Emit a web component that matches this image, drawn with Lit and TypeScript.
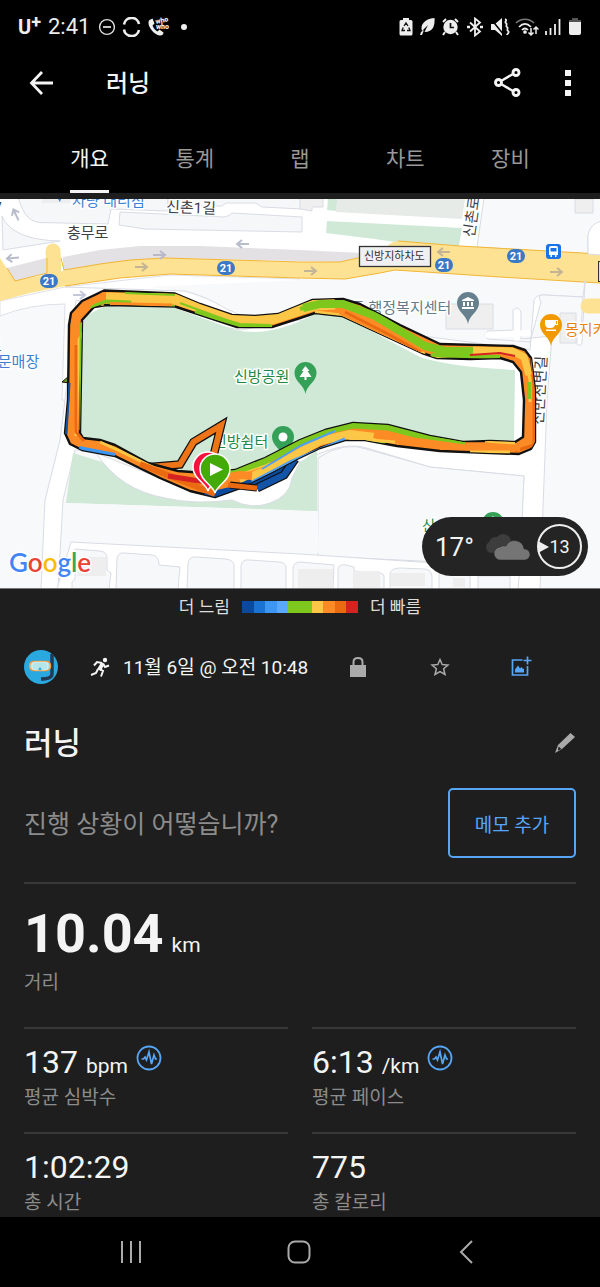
import { LitElement, html, svg, css } from "lit";
import { customElement } from "lit/decorators.js";
import { classMap } from "lit/directives/class-map.js";

const FONT = css`Roboto, "Noto Sans CJK KR", sans-serif`;

@customElement("status-bar")
class StatusBar extends LitElement {
  static styles = css`
    :host { display: flex; justify-content: space-between; align-items: center; height: 53px; padding: 0 16px 0 18px; color: #eee; font-family: ${FONT}; }
    .side { display: flex; align-items: center; }
    .left { gap: 7px; }
    .right { gap: 5px; }
    .carrier { display: flex; font-size: 20px; line-height: 24px; font-weight: 700; }
    .carrier sup { font-size: 18px; line-height: 14px; }
    .time { font-size: 22px; line-height: 26px; }
    svg { display: block; }
    .who { font-size: 7px; font-weight: 900; fill: #eee; }
  `;
  render() {
    return html`
      <div class="side left">
        <span class="carrier">U<sup>+</sup></span>
        <span class="time">2:41</span>
        <svg width="18" height="18" viewBox="0 0 18 18" fill="none" stroke="#ddd" stroke-width="1.4"><circle cx="10" cy="9" r="7.4"/><path d="M6 9h8" stroke-width="1.8"/></svg>
        <svg width="19" height="20" viewBox="0 0 19 20" fill="none" stroke="#eee" stroke-width="2.6"><path d="M2 7.500A7.600 7.600 0 0 1 17 7M2 12.500A7.600 7.600 0 0 0 17 13"/></svg>
        <svg width="25" height="20" viewBox="0 0 25 20"><path fill="#eee" d="M1.500 3l3-1.500 2 5-2 2c1 3 3 5 5 6l2-2 4 3c0 3-3 3-4 3C7 18 .5 11 .5 6c0-1 0-2 1-3z"/><text class="who" x="8" y="7" transform="rotate(-12 8 7)">who</text><text class="who" x="8" y="12">who</text></svg>
        <svg width="8" height="8"><circle cx="4" cy="4" r="3" fill="#eee"/></svg>
      </div>
      <div class="side right">
        <svg width="14" height="19" viewBox="0 0 14 19"><path fill="#eee" d="M4 1h6v2h2q1.500 0 1.500 1.500V17q0 1.500-1.500 1.500H2Q.5 18.500.5 17V4.500Q.5 3 2 3h2z"/><path d="M5 9l2-3 2 3M9.800 10.500l1.200 3H8M6 13.500H3l1.200-3" fill="none" stroke="#111" stroke-width="1.3"/></svg>
        <svg width="18" height="19" viewBox="0 0 18 19"><path fill="#eee" d="M16.500 1c.5 7-1 14-10 14L10 8l-6 6C2 8 6 2 16.500 1zM3 15l3-2-2 5H2z"/></svg>
        <svg width="19" height="19" viewBox="0 0 19 19"><circle cx="9.500" cy="10" r="7.200" fill="#eee"/><path d="M9.500 6v4.500H13" stroke="#111" stroke-width="1.700" fill="none"/><path d="M2 5l3-3M17 5l-3-3M4 15l-2 3M15 15l2 3" stroke="#eee" stroke-width="2"/></svg>
        <svg width="20" height="20" viewBox="0 0 20 20" fill="none" stroke="#eee" stroke-width="1.800"><path d="M5 5.500l10 9-5 4V1.500l5 4-10 9"/><path d="M2 10h3M15 10h3" stroke-width="2.500"/></svg>
        <svg width="20" height="20" viewBox="0 0 20 20"><path fill="#eee" d="M1 7h4l7-6v18l-7-6H1z"/><path d="M1 2l13 16" stroke="#000" stroke-width="1.500"/><path d="M15 2c3 1-1 3 1 4s-1 3 1 4-1 3 1 4-1 3-1 4" fill="none" stroke="#eee" stroke-width="1.800"/></svg>
        <svg width="24" height="20" viewBox="0 0 24 20" fill="none" stroke="#eee" stroke-width="1.700"><path d="M1 6C6 1 14 1 19 6" stroke="#777"/><path d="M4 10c4-4 8-4 12 0M7 13c2-2 4-2 6 0"/><circle cx="10" cy="15" r="1" fill="#eee"/><path d="M16 11v7M13.500 15.500L16 18l2.500-2.500M21 17v-7M18.500 12.500L21 10l2.500 2.500" stroke-width="1.500"/></svg>
        <svg width="17" height="19" viewBox="0 0 17 19" stroke="#eee" stroke-width="1.800"><path d="M2 14v4M6.500 11v7M11 7v11M15.500 2v16"/></svg>
        <svg width="18" height="19" viewBox="0 0 18 19"><path fill="#555" d="M6 1h6v2h3v3H3V3h3z"/><path fill="#eee" d="M3 5h12v11q0 2-2 2H5q-2 0-2-2z"/></svg>
      </div>`;
  }
}

@customElement("app-header")
class AppHeader extends LitElement {
  static styles = css`
    :host { display: block; color: #f4f4f4; font-family: ${FONT}; }
    .bar { display: flex; align-items: center; height: 60px; padding: 0 14px 0 24px; }
    h1 { flex: 1; margin: 0 0 0 48px; padding-top: 2px; font-size: 24px; line-height: 32px; font-weight: 500; }
    button { border: 0; padding: 0; background: none; color: inherit; font: inherit; cursor: pointer; }
    svg { display: block; }
    .share { margin-right: 27px; }
    .tabs { display: flex; padding: 0 37px; }
    .tabs div { flex: 1; display: flex; justify-content: center; }
    .tab { height: 80px; box-sizing: border-box; padding: 15px 0 0; border-bottom: 3px solid transparent; font-size: 21px; line-height: 28px; color: #999; }
    .on { color: #f4f4f4; border-color: #f4f4f4; }
  `;
  render() {
    return html`
      <div class="bar">
        <button aria-label="뒤로"><svg width="34" height="34" viewBox="0 0 34 34" fill="none" stroke="#f4f4f4" stroke-width="2.800"><path d="M18 6L7.500 17 18 28M7.500 17H29"/></svg></button>
        <h1>러닝</h1>
        <button class="share" aria-label="공유"><svg width="32" height="34" viewBox="0 0 32 34" fill="none" stroke="#f4f4f4" stroke-width="2.900"><path d="M10 15l12-7M10 18l12 7" stroke-width="2.400"/><circle cx="7.500" cy="16.500" r="3"/><circle cx="25" cy="6.500" r="3"/><circle cx="25" cy="26.500" r="3"/></svg></button>
        <button aria-label="더보기"><svg width="36" height="34" viewBox="0 0 36 34" fill="#f4f4f4"><path d="M15 4h6v6h-6zM15 14h6v6h-6zM15 24h6v6h-6z"/></svg></button>
      </div>
      <nav class="tabs">
        ${["개요", "통계", "랩", "차트", "장비"].map(
          (t, i) => html`<div><button class=${classMap({ tab: true, on: i === 0 })}>${t}</button></div>`
        )}
      </nav>`;
  }
}

const shield = (x: number, y: number) => svg`
  <rect x=${x - 9} y=${y - 7} width="18" height="14" rx="7" fill="#3b78c6"/>
  <text class="num" x=${x} y=${y + 4}>21</text>`;
const arrow = (x: number, y: number, r: number, c: string) => svg`
  <path transform="translate(${x} ${y}) rotate(${r})" d="M-6 0H5M1-4l5 4-5 4" stroke=${c} stroke-width="2" fill="none"/>`;
const pin = (x: number, y: number, c: string, inner: unknown) => svg`
  <g transform="translate(${x} ${y})"><path d="M0 21C-1 12-11 9-11 0a11 11 0 0 1 22 0C11 9 1 12 0 21z" fill=${c}/>${inner}</g>`;

const BAND =
  "M65 433L68 400 69 325 71 313 82 301 104 290.500 175 293.500 200 304 232 315 255 316 278 314 300 305 312 300 343 299 360 304 400 325 440 344 513 346 525 350 531 358 535 390 535 442 531 449 519 454 490 453 440 451 397 446 365 440 345 440 320 448 297 459 268 474 240 488 215 497 190 491 160 478 115 456 82 450 70 444z" +
  "M82 320L80 433 83 438 100 440 115 445 148 463 178 471 205 473 235 470 265 458 300 440 325 430 353 423 388 425 430 436 463 442 490 441 515 442 523 437 524 400 521 372 513 362 500 358 470 359 437 358 422 353 342 316 315 313 300 318 272 327 237 327 175 306.500 107 305 94 307z";

@customElement("route-map")
class RouteMap extends LitElement {
  static styles = css`
    :host { display: block; position: relative; background: #f8f9fb; font-family: ${FONT}; }
    .map { display: block; width: 100%; height: auto; }
    text { font-size: 15px; paint-order: stroke; stroke: #fff; stroke-width: 3px; stroke-linejoin: round; }
    .road { fill: #3c4048; }
    .blue { fill: #3b7fd0; }
    .green { fill: #1e8a45; }
    .slate { fill: #5f7c8c; }
    .orange { fill: #e8830c; }
    .plate { font-size: 11px; fill: #333; stroke: none; }
    .num { font-size: 11px; font-weight: 700; fill: #fff; stroke: none; text-anchor: middle; }
    .logo { font-family: Lato, sans-serif; font-size: 26px; font-weight: 600; }
    .edge { stroke: #d9dce4; stroke-width: 1; }
    .weather { position: absolute; right: 12px; bottom: 12px; display: flex; align-items: center; height: 59px; width: 166px; box-sizing: border-box; padding: 0 6px 0 13px; border-radius: 30px; background: #242424; color: #f4f4f4; }
    .temp { flex: 1; font-size: 26px; line-height: 32px; }
    .wind { display: flex; align-items: center; justify-content: center; position: relative; width: 45px; height: 45px; margin-left: 6px; border: 2px solid #eee; border-radius: 50%; box-sizing: border-box; font-size: 18px; line-height: 24px; }
    .wind svg { position: absolute; left: -1px; top: 15px; }
  `;
  render() {
    return html`
      <svg class="map" viewBox="0 199 600 389" role="img" aria-label="지도">
        <rect y="199" width="600" height="389" fill="#f8f9fb"/>
        <path fill="#fff" d="M0 199H484L477 250 600 256V262L0 301z"/>
        <g fill="#f6f7f9" class="edge">
          <path d="M2 216Q12 240 60 241L3 250z"/>
          <path d="M18 198L22 208Q28 222 40 222.500L108 224 111 209 168 211V198z"/>
          <path d="M120 212L224 217Q230 216 232 213L302 217V232L145 229 119 225z"/>
          <path d="M168 198V206L222 206 226 203H256L262 207 302 209V198z"/>
        </g>
        <path fill="#efefef" stroke="#d9dce4" d="M300 198H323V207H312V211L300 209z"/>
        <path fill="#eeeeef" d="M42 199H70V203H42z"/>
        <path fill="#cfe9d6" d="M328 199H338L336 211 327 210zM327 221L462 228 459 246 395 242 375 239 326 233z"/>
        <path fill="#e6ebe7" d="M337 199H465L462 219 336 212z"/>
        <path class="edge" fill="#f8f9fb" d="M484 198H601V221Q590 226 588 236V254L477 247z"/>
        <path fill="#efefef" class="edge" d="M575 199H593V213H575z"/>

        <path fill="#e3e1e4" d="M7 268L46 258V273L15 281zM63 257L100 250 140 246 200 246 300 250 362 253V257L340 262 165 258 63 271z"/>
        <path fill="#fff" stroke="#dfe1e8" d="M0 301L65 287 170 275 300 279 300 400 62 400 65 304Q30 304 0 316z"/>
        <path fill="#f8f9fb" d="M150 287L300 280V310L245 316 220 305 185 292zM300 279L345 280 395 271 600 284V500H300z"/>
        <path fill="none" class="edge" d="M65 287L185 291Q205 296 225 308L240 315"/>
        <path fill="#fde293" d="M0 258L15 281 63 271 100 264 130 260 165 258 300 262 340 262 362 257 388 246Q392 241 400 241L460 246 600 254V283L500 277 395 270 380 273 345 279 300 278 170 274 120 278 65 286 30 293 0 301z"/>
        <path stroke="#fde293" stroke-width="15" stroke-linecap="round" d="M53 251L54 278"/>
        <path fill="none" stroke="#f2b534" d="M7 268L15 281 47 273V258M61 258L64 270 100 264 130 260 165 258 300 262 340 262 362 257M398 241L460 246 600 254M600 283L500 277 395 270 380 273 345 279 300 278 170 274 120 278 65 286"/>
        <path fill="#fff" class="edge" d="M588 254V235Q590 224 601 221V255z"/>

        <path fill="#fff" class="edge" d="M585 281L582 343Q580 347 577 344V333L552 336 547 400 540 589H518L524 476 430 467 370 449Q345 440 310 458L300 462 75 450 63 500 58 589H41L45 500 60 440 65 400 76 300 240 330 300 320 530 350 534 300Q537 294 545 295L583 297 585 281z"/>
        <path fill="#f8f9fb" class="edge" d="M541 302Q536 294 545 295L583 297 581 332 552 336 521 339V312Q518 305 513 310V330L488 331Q482 335 488 339L530 342z"/>
        <path stroke="#fff" stroke-width="6" fill="none" stroke-linecap="round" d="M488 335L528 333M517 312V338M552 334L580 331"/>
        <path stroke="#fde293" stroke-width="15" stroke-linecap="round" d="M588 306H601"/>
        <path fill="#efefef" class="edge" d="M446 304H493V329H446zM560 313H576V343H560z"/>
        <path fill="#cfe9d6" d="M82 318L105 306 175 308 235 330Q270 338 315 314L345 317 420 357Q450 367 515 370L514 440 460 441 360 424 320 432 240 471 175 472 110 447 81 440z"/>
        <path fill="#cfe9d6" d="M73 453L66 503 317 511V450L290 470 240 490 160 480z"/>
        <path fill="#fff" class="edge" d="M96 453Q120 490 165 498 195 505 232 500 252 510 270 503 290 496 292 478L300 462 240 470 160 478z"/>
        <path fill="#f8f9fb" class="edge" d="M318 458Q345 440 370 450L430 467 524 476 520 566 318 556z"/>
        <path fill="#f8f9fb" d="M66 503L318 511 319 553 70 541z"/>
        <path fill="#cfe9d6" d="M300 462L317 453V511L290 510V497z"/>
        <path fill="#fff" class="edge" d="M71 542L300 554 420 562 520 566 518 589H57z"/>
        <path fill="#f7f8fa" class="edge" d="M75 549L100 551Q107 552 107 558V570L111 573 109 589H72V582L75 579zM116 589L117 559Q118 552 124 553L152 555Q159 556 159 565L180 567 178 589zM187 589L188 564Q189 556 196 557L226 559Q234 560 234 566V589zM241 589V566Q242 559 249 560L280 562Q287 563 286 570V589zM293 589V568Q294 562 300 562L334 565 333 589zM338 589V568Q340 564 346 565L354 567V571L380 573Q385 574 384 578V589zM390 589V574Q391 568 400 568L425 569Q432 570 432 577V589zM439 589V572L470 574V589zM478 589V576H510V589z"/>
        <path fill="#eeeeef" d="M83 557H106V576H77zM298 569H333V589H298zM353 571H380V589H353zM391 573H425V586H391zM453 578H465V587H453z"/>

        ${arrow(16, 215, -115, "#b8bccb")}${arrow(13, 258, 175, "#b8bccb")}${arrow(159, 255, 0, "#b8b8c8")}
        ${arrow(243, 244, 180, "#b8bccb")}${arrow(79, 295, 0, "#c4c8d8")}${arrow(141, 267, 0, "#c3b496")}
        ${arrow(310, 271, 0, "#c3b496")}${arrow(444, 252, 180, "#c3b496")}${arrow(556, 272, 0, "#c3b496")}
        ${shield(49, 281)}${shield(226, 268)}${shield(444, 265)}${shield(516, 256)}
        <rect x="546" y="244" width="15" height="15" rx="3" fill="#1a73e8"/>
        <path fill="#fff" d="M549 248q0-2 2-2h5q2 0 2 2v7h-1.500v2H555v-2h-3v2h-1.500v-2H549zM550.500 248v3.500h6V248z" fill-rule="evenodd"/>
        <rect x="359.500" y="246.500" width="71" height="20" fill="#f0f0f2" stroke="#333" stroke-width="1.300"/>
        <text class="plate" x="364" y="260">신방지하차도</text>
        <rect x="598.500" y="261.500" width="20" height="20" fill="#ddd" stroke="#333"/>

        <path d="M58 199l2 3 1-3" fill="#3b7fd0"/>
        <text class="blue" x="72" y="206">차량 대리점</text>
        <text class="road" x="166" y="212" transform="rotate(2 166 212)">신촌1길</text>
        <text class="road" x="67" y="238">충무로</text>
        <text class="road" x="-8" y="213">V</text>
        <text class="road" transform="translate(474 238) rotate(-82)">신촌로</text>
        <text class="blue" x="-12" y="351">로</text>
        <text class="blue" x="-16" y="367">전문매장</text>
        <text class="green" x="234" y="382">신방공원</text>
        <text class="green" x="213" y="447">신방쉼터</text>
        <text class="slate" x="351" y="313">동 행정복지센터</text>
        <text class="orange" x="565" y="335">몽지카페</text>
        <text class="road" transform="translate(543 425) rotate(-87)">신반천변길</text>
        <text class="green" x="422" y="531">산</text>
        ${pin(305.500, 373, "#34a058", svg`<path fill="#fff" d="M0-7L4-2H2L6 4H1v3h-2V4h-5l4-6h-2z"/>`)}
        ${pin(283, 437, "#34a058", svg`<circle r="4.500" fill="#fff"/>`)}
        ${pin(468, 303, "#66808e", svg`<path fill="#fff" d="M0-6l6 3v1H-6v-1zM-5-1h2v4h-2zM-1-1h2v4h-2zM3-1h2v4H3zM-6 4H6v2H-6z"/>`)}
        ${pin(551, 325, "#f29900", svg`<path fill="#fff" d="M-6-5H7v5H4Q3 3 0 3h-2q-4 0-4-5zM-5 4.500H5V6H-5zM5-4v3h1v-3z" fill-rule="evenodd"/>`)}
        ${pin(493, 523, "#34a058", svg`<path fill="#fff" d="M0-7L4-2H-4z"/>`)}

        <g fill="none" stroke-miterlimit="6">
          <path d="M252 485L276 474 291 459" stroke="#111" stroke-width="8"/>
          <path d="M252 485L276 474 291 459" stroke="#0b4a9e" stroke-width="5.500"/>
          <path d="M257 488L284 475 295 459" stroke="#111" stroke-width="9"/>
          <path d="M257 488L284 475 295 459" stroke="#1254a8" stroke-width="6.500"/>
          <path d="M150 467L180 464.500 193.500 442 221 425.500 211 466" stroke="#111" stroke-width="8.500"/>
          <path d="M150 467L180 464.500 193.500 442 221 425.500 211 466" stroke="#ee7418" stroke-width="6"/>
        </g>
        <path d="M69 376L62 382 69 383z" fill="#5f9a20" stroke="#111"/>
        <clipPath id="band"><path clip-rule="evenodd" d=${BAND}/></clipPath>
        <path d=${BAND} fill="#fd8b25" fill-rule="evenodd" stroke="#111" stroke-width="2.400" stroke-linejoin="round"/>
        <g clip-path="url(#band)" fill="none" stroke-linejoin="round">
          <path stroke="#fcc746" stroke-width="11" d="M106 298L175 299 215 312 240 320 272 319 315 305 335 304"/>
          <path stroke="#fcc746" stroke-width="3" d="M76 436L79 340 92 315 104 305M425 354L342 315 315 312M430 357L510 352 525 358 530 380V402"/>
          <path stroke="#7ec81e" stroke-width="3" d="M81 430V325L96 308M90 307L107 301 130 302 112 303"/>
          <path stroke="#7ec81e" stroke-width="2" d="M107 303L175 306M180 303L240 325 272 326M125 293L175 295"/>
          <path stroke="#7ec81e" stroke-width="4" d="M195 312L240 325 271 326M300 309L320 303 343 304"/>
          <path stroke="#7ec81e" stroke-width="8" d="M303 308L320 304 343 304 375 316 425 346 445 351 473 351"/>
          <path stroke="#7ec81e" stroke-width="4" d="M431 355L500 357M529 382V399"/>
          <path stroke="#fcc746" stroke-width="7" d="M473 350L512 351 524 357 529 375"/>
          <path stroke="#fd8b25" stroke-width="3" d="M110 303.500L172 305"/>
          <path stroke="#fd8b25" stroke-width="5" d="M340 312L422 352M84 308L104 294"/>
          <path stroke="#ea6a12" stroke-width="3" d="M76 345V432L84 441M345 312L390 335 420 352M532 358L534 385V445L515 451"/>
          <path stroke="#d62222" stroke-width="2" d="M470 355L500 353 515 356"/>
          <path stroke="#1254a8" stroke-width="3" d="M66 434L69 383"/>
          <path stroke="#3d96f2" stroke-width="4" d="M79 448L115 455"/>
          <path stroke="#fcc746" stroke-width="3" d="M100 442L120 451 165 473M240 473L270 463"/>
          <path stroke="#7ec81e" stroke-width="7" d="M230 473L265 461 300 443 325 431 353 425 388 427 430 438 465 443"/>
          <path stroke="#fcc746" stroke-width="8" d="M240 481L270 469 320 441 350 434 400 440"/>
          <path stroke="#4b9ff5" stroke-width="2" d="M262 469L300 446 335 431"/>
          <path stroke="#4b9ff5" stroke-width="3" d="M250 483L290 462 345 439"/>
          <path stroke="#0b4a9e" stroke-width="8" d="M205 497L235 490 252 482"/>
          <path stroke="#fd8b25" stroke-width="8" d="M374 434L400 440 450 446 520 447M210 481L240 475 252 476"/>
          <path stroke="#7ec81e" stroke-width="3" d="M355 439L385 442M430 438L465 443"/>
          <path stroke="#fcc746" stroke-width="3" d="M470 452L510 452M485 441L515 443M345 438L395 442"/>
          <path stroke="#ea6a12" stroke-width="6" d="M140 464L175 478 215 494"/>
          <path stroke="#d62222" stroke-width="5" d="M168 476L212 483"/>
        </g>
        <path d="M230 485L257 488" stroke="#111" stroke-width="7"/><path d="M228 485L257 488" stroke="#ea6a12" stroke-width="5"/>
        <path d="M208 491C206 483 193 479 193 467a15 15 0 0 1 30 0C223 479 210 483 208 491z" fill="#f5123c" stroke="#fff" stroke-width="1.500"/>
        <path d="M215 493C213 485 200 481 200 469a15 15 0 0 1 30 0C230 481 217 485 215 493z" fill="#44aa08" stroke="#fff" stroke-width="1.500"/>
        <path d="M210 463v13l13-6.500z" fill="#fff"/>
        <text class="logo" x="9" y="572"><tspan fill="#4285f4">G</tspan><tspan fill="#ea4335">o</tspan><tspan fill="#fbbc05">o</tspan><tspan fill="#4285f4">g</tspan><tspan fill="#34a853">l</tspan><tspan fill="#ea4335">e</tspan></text>
      </svg>
      <div class="weather">
        <span class="temp">17°</span>
        <svg width="46" height="28" viewBox="0 0 46 28"><path fill="#3d3d3d" d="M6 20a6 6 0 0 1-2-11 7 7 0 0 1 8-5 8 8 0 0 1 14 3l-8 12z"/><path fill="#757575" stroke="#242424" stroke-width="0.500" d="M16 27a6.500 6.500 0 0 1-1-13 7 7 0 0 1 6-1 9.500 9.500 0 0 1 18 3 5.500 5.500 0 0 1 1 11z"/></svg>
        <span class="wind"><svg width="11" height="12"><path d="M0 0L11 6 0 12z" fill="#eee"/></svg>13</span>
      </div>`;
  }
}

const pulse = html`<svg width="26" height="26" viewBox="0 0 26 26" fill="none" stroke="#57a5f5"><circle cx="13" cy="13" r="11.500" stroke-width="1.800"/><path d="M5.500 14h2l1.500-2 1.500 3 2.500-8 2.500 12 2.500-9 1.500 4h1.500" stroke-width="1.700"/></svg>`;
const COLORS = ["#074a9e", "#1a73d3", "#3d96f2", "#5aa8fb", "#7ec81e", "#7ec81e", "#fcc746", "#fd8b25", "#ea6a12", "#d62222"];

@customElement("activity-summary")
class ActivitySummary extends LitElement {
  static styles = css`
    :host { display: block; color: #f4f4f4; font-family: ${FONT}; }
    svg { display: block; }
    button { border: 0; padding: 0; background: none; font: inherit; cursor: pointer; }
    .legend { display: flex; align-items: center; justify-content: center; gap: 12px; height: 36px; border-top: 1px solid #777; font-size: 17px; line-height: 24px; color: #ddd; }
    .scale { display: flex; width: 116px; }
    .scale i { flex: 1; height: 12px; }
    .body { padding: 0 24px; }
    .meta { display: flex; align-items: center; height: 83px; }
    .run { margin: 0 12px 0 31px; }
    .date { font-size: 19px; line-height: 28px; flex: none; padding-top: 2px; }
    .actions { flex: 1; display: flex; justify-content: space-between; padding: 0 44px 0 39px; }
    .title { display: flex; align-items: center; justify-content: space-between; height: 69px; }
    h2 { margin: 0; padding-top: 2px; font-size: 31px; line-height: 40px; font-weight: 500; }
    .note { display: flex; align-items: center; justify-content: space-between; padding: 11px 0 24px; border-bottom: 2px solid #383838; }
    .note p { margin: 0; padding-top: 4px; font-size: 25px; line-height: 36px; color: #8c8c8c; }
    .add { width: 128px; height: 70px; border: 2px solid #57a5f5; border-radius: 5px; color: #57a5f5; font-size: 19px; }
    dl { display: grid; grid-template-columns: 1fr 1fr; column-gap: 24px; margin: 0; }
    .stat { display: flex; flex-direction: column-reverse; justify-content: flex-end; height: 105px; box-sizing: border-box; border-top: 2px solid #383838; padding-top: 13px; }
    .wide { grid-column: 1 / -1; height: 143px; border: 0; padding-top: 17px; }
    dt { font-size: 19px; line-height: 28px; color: #8c8c8c; }
    dd { display: flex; align-items: baseline; gap: 8px; margin: 0 0 2px; font-size: 32px; line-height: 40px; }
    dd svg { align-self: flex-start; margin-top: 3px; }
    .unit { font-size: 21px; line-height: 20px; }
    .wide dd { font-size: 54px; line-height: 66px; font-weight: 700; }
    .wide .unit { font-weight: 400; }
    .last { height: 85px; }
  `;
  render() {
    return html`
      <div class="legend"><span>더 느림</span><span class="scale">${COLORS.map((c) => html`<i style="background:${c}"></i>`)}</span><span>더 빠름</span></div>
      <div class="body">
        <div class="meta">
          <svg width="34" height="34" viewBox="0 0 34 34"><circle cx="17" cy="17" r="17" fill="#29a9e0"/><path d="M28 4V24q0 5-11 5" fill="none" stroke="#233a55" stroke-width="3.500"/><rect x="5.500" y="11.500" width="21" height="9" rx="4" fill="#a9dfe6" stroke="#f29a3c" stroke-width="1.500"/><rect x="8" y="12" width="16" height="8" rx="3" fill="#b4e6ea" stroke="#eefafa" stroke-width=".6"/><path d="M14 20l2-3 2 3z" fill="#29a9e0"/></svg>
          <svg class="run" width="22" height="22" viewBox="0 0 22 22" fill="none" stroke="#f4f4f4"><circle cx="16" cy="4" r="2.200" fill="#f4f4f4" stroke="none"/><path d="M14 7l-4 7" stroke-width="4"/><path d="M13 7L8 6 5 9.500M14 8l2 3 4-1.500M11 13l3 2-2 5.500M9 13l-2 4-5 2" stroke-width="2"/></svg>
          <span class="date">11월 6일 @ 오전 10:48</span>
          <div class="actions">
            <button aria-label="비공개"><svg width="22" height="22" viewBox="0 0 22 22"><path fill="#aaa" d="M3 9h16v12H3z"/><path d="M6.500 10V6q0-4 4.500-4t4.500 4v4" fill="none" stroke="#aaa" stroke-width="2"/></svg></button>
            <button aria-label="즐겨찾기"><svg width="22" height="22" viewBox="0 0 22 22" fill="none" stroke="#aaa" stroke-width="1.500"><path d="M11 3.500l2.200 5 5.800.5-4.400 3.800 1.400 5.700-5-3-5 3 1.400-5.700L3 9l5.800-.5z"/></svg></button>
            <button aria-label="사진 추가"><svg width="22" height="22" viewBox="0 0 22 22" fill="none" stroke="#57a5f5" stroke-width="1.700"><path d="M12.500 4H2.500v15h15V10M13.500 4.500h8M17.500.5v8"/><path fill="#57a5f5" stroke="none" d="M5 16.500v-3l3-4 2 3 1.500-1.500 1.500 2 1-.5v4z"/></svg></button>
          </div>
        </div>
        <div class="title"><h2>러닝</h2><button aria-label="편집"><svg width="24" height="24" viewBox="0 0 24 24"><path fill="#aaa" d="M18.500 2l4.500 4L10 18l-7 4 3-8z"/><path d="M6.500 15.500l3 2.500-3.500 1.500z" fill="#1e1e1e"/></svg></button></div>
        <div class="note"><p>진행 상황이 어떻습니까?</p><button class="add">메모 추가</button></div>
        <dl>
          <div class="stat wide"><dt>거리</dt><dd>10.04<span class="unit">km</span></dd></div>
          <div class="stat"><dt>평균 심박수</dt><dd>137<span class="unit">bpm</span>${pulse}</dd></div>
          <div class="stat"><dt>평균 페이스</dt><dd>6:13<span class="unit">/km</span>${pulse}</dd></div>
          <div class="stat last"><dt>총 시간</dt><dd>1:02:29</dd></div>
          <div class="stat last"><dt>총 칼로리</dt><dd>775</dd></div>
        </dl>
      </div>`;
  }
}

@customElement("app-root")
class AppRoot extends LitElement {
  static styles = css`
    :host { display: flex; flex-direction: column; min-height: 100vh; background: #1e1e1e; }
    .top { background: #000; margin-bottom: 6px; }
    main { flex: 1; }
    .system { display: flex; justify-content: center; gap: 128px; align-items: center; height: 70px; padding-right: 3px; background: #000; }
    .system button { border: 0; padding: 0; background: none; width: 40px; cursor: pointer; }
    .system svg { display: block; margin: 0 auto; }
  `;
  render() {
    return html`
      <div class="top"><status-bar></status-bar><app-header></app-header></div>
      <main><route-map></route-map><activity-summary></activity-summary></main>
      <nav class="system">
        <button aria-label="최근 앱"><svg width="26" height="26" viewBox="0 0 26 26" stroke="#aaa" stroke-width="2"><path d="M4 2v22M13 2v22M22 2v22"/></svg></button>
        <button aria-label="홈"><svg width="26" height="26" viewBox="0 0 26 26" fill="none" stroke="#aaa" stroke-width="2"><rect x="2.500" y="2.500" width="21" height="21" rx="6.500"/></svg></button>
        <button aria-label="뒤로"><svg width="26" height="26" viewBox="0 0 26 26" fill="none" stroke="#aaa" stroke-width="2"><path d="M18 2L7 13l11 11"/></svg></button>
      </nav>`;
  }
}
